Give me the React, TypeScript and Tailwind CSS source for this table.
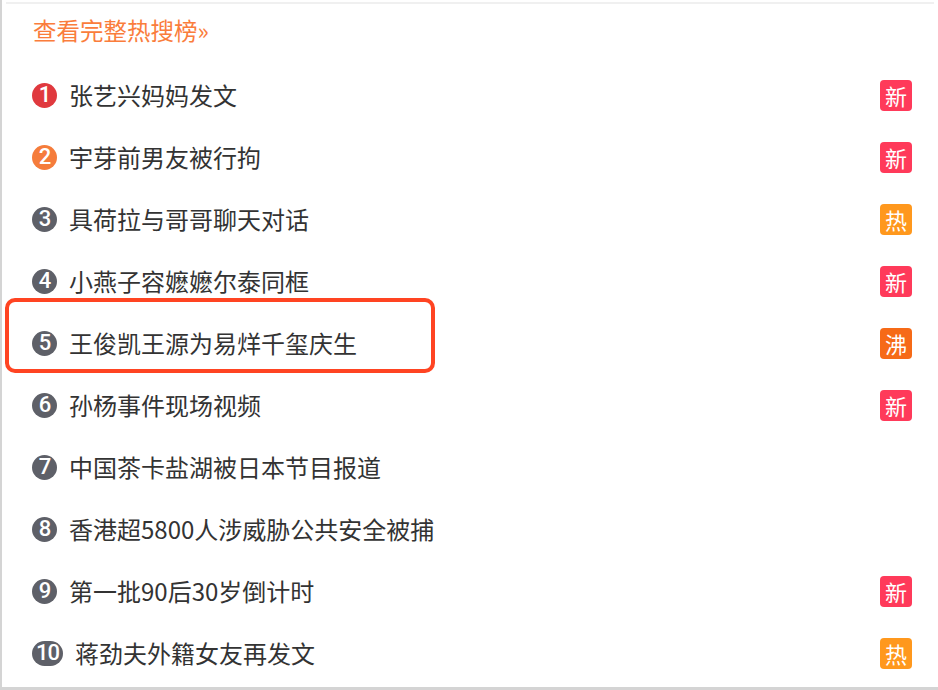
const items: { title: string; tag?: string }[] = [
  { title: "张艺兴妈妈发文", tag: "新" },
  { title: "宇芽前男友被行拘", tag: "新" },
  { title: "具荷拉与哥哥聊天对话", tag: "热" },
  { title: "小燕子容嬷嬷尔泰同框", tag: "新" },
  { title: "王俊凯王源为易烊千玺庆生", tag: "沸" },
  { title: "孙杨事件现场视频", tag: "新" },
  { title: "中国茶卡盐湖被日本节目报道" },
  { title: "香港超5800人涉威胁公共安全被捕" },
  { title: "第一批90后30岁倒计时", tag: "新" },
  { title: "蒋劲夫外籍女友再发文", tag: "热" },
];

const tagColor: Record<string, string> = {
  新: "bg-[#ff3a5a]",
  热: "bg-[#ff981d]",
  沸: "bg-[#f66a17]",
};

function Rank({ n }: { n: number }) {
  const color = n === 1 ? "bg-[#e0393e]" : n === 2 ? "bg-[#f57c3b]" : "bg-[#5e6068]";
  const size = n >= 10 ? "w-[31px]" : "w-[25px]";
  return (
    <span
      className={`${color} ${size} h-[25px] rounded-full shrink-0 flex items-center justify-center text-white text-[22px] font-medium leading-none font-['Roboto',sans-serif] tracking-[-1px]`}
    >
      {n}
    </span>
  );
}

export default function App() {
  const font = "font-['Noto_Sans_CJK_SC','Noto_Sans',sans-serif]";
  return (
    <div className={`relative w-[938px] h-[690px] bg-white ${font}`}>
      <div className="h-full border-l-2 border-b-[3px] border-[#d4d4d4] flex flex-col">
        {/* top divider */}
        <div className="h-[2px] mt-[2px] ml-[4px] mr-[4px] bg-[#f0f0f0]" />

        {/* header link */}
        <div className="h-[60px] flex items-center pl-[31px] pb-[6px]">
          <a href="#" className="text-[#fa7d3c] text-[23.5px] leading-none">
            查看完整热搜榜»
          </a>
        </div>

        {/* list */}
        <ul className="flex flex-col">
          {items.map((it, i) => (
            <li key={i} className="h-[62px] flex items-center pl-[30px] pr-[26px]">
              <Rank n={i + 1} />
              <span className="ml-[12px] text-[24px] text-[#333] leading-none flex-1">
                {it.title}
              </span>
              {it.tag && (
                <span
                  className={`${tagColor[it.tag]} w-[32px] h-[31px] rounded-[4px] flex items-center justify-center text-white text-[22px] leading-none`}
                >
                  {it.tag}
                </span>
              )}
            </li>
          ))}
        </ul>
      </div>

      {/* highlight box */}
      <div className="absolute left-[5px] top-[298px] w-[430px] h-[75px] border-4 border-[#ff4422] rounded-[10px]" />
    </div>
  );
}
